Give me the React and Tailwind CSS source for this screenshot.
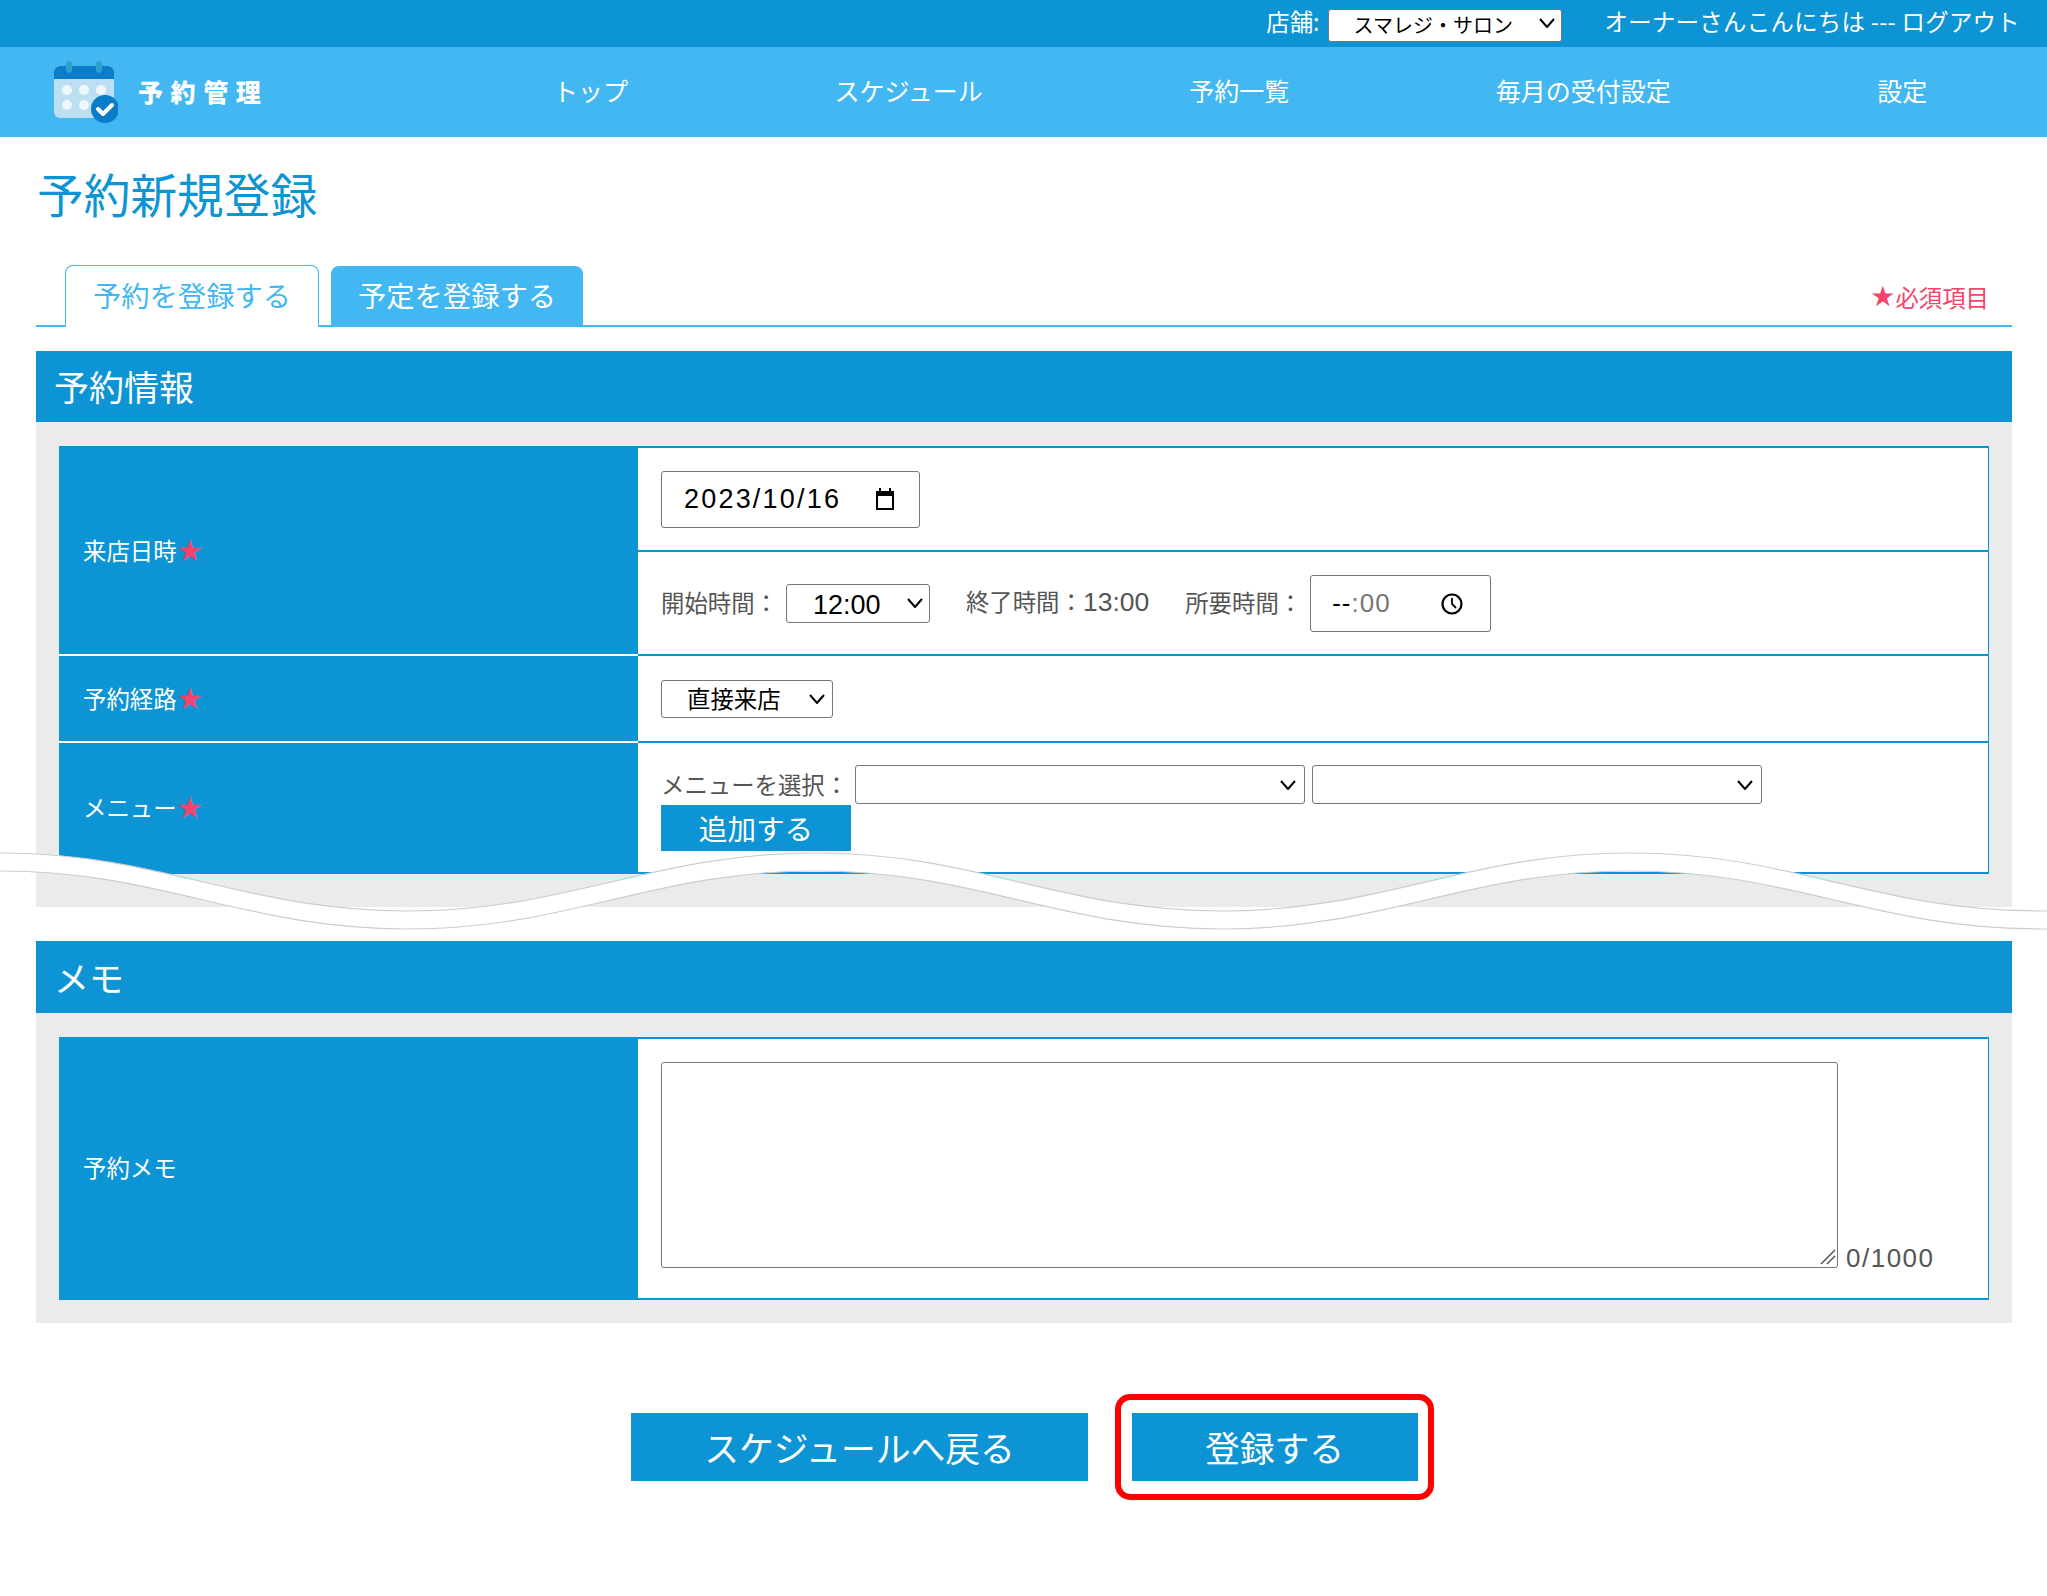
import React from 'react';

const Chevron = ({ className }) => (
    <svg viewBox="0 0 16 10" className={`absolute pointer-events-none w-[16px] h-[10px] ${className}`} fill="none" stroke="#000" strokeWidth="2">
        <path d="M1 1l7 8 7-8" />
    </svg>
);

const Select = ({ className, textClass = 'pl-[25px] pb-[1px] text-[23.4px]', chevronClass = 'right-[7px] top-[14px]', children }) => (
    <div className={`relative ${className}`}>
        <select className={`appearance-none w-full h-full bg-white border border-[#767676] rounded-[3px] text-black ${textClass}`}>
            {children}
        </select>
        <Chevron className={chevronClass} />
    </div>
);

const Star = ({ className }) => (
    <span className={`font-['DejaVu_Sans',sans-serif] leading-none text-[#f5436d] ${className}`}>★</span>
);

const Label = ({ text, required, className }) => (
    <div className={`w-[579px] shrink-0 bg-[#0d94d4] flex items-center pl-[24px] text-white text-[23.4px] ${className}`}>
        {text}
        {required && <Star className="text-[30px]" />}
    </div>
);

const SectionTitle = ({ children, className }) => (
    <div className={`bg-[#0d94d4] text-white text-[35px] pl-[18px] flex items-center ${className}`}>{children}</div>
);

const navItems = ['トップ', 'スケジュール', '予約一覧', '毎月の受付設定', '設定'];

const Logo = () => (
    <svg viewBox="0 0 64 62" className="w-[64px] h-[62px] shrink-0">
        <rect x="0" y="5" width="60" height="52" rx="6" fill="#bce0f1" />
        <path d="M0 18V11a6 6 0 0 1 6-6h48a6 6 0 0 1 6 6v7z" fill="#0a7cc8" />
        <rect x="12" y="0" width="6" height="12" rx="3" fill="#2f9fd0" />
        <rect x="42" y="0" width="6" height="12" rx="3" fill="#2f9fd0" />
        <g fill="#eef7fb">
            <circle cx="13" cy="29" r="5" />
            <circle cx="30" cy="29" r="5" />
            <circle cx="47" cy="29" r="5" />
            <circle cx="13" cy="44" r="5" />
            <circle cx="30" cy="44" r="5" />
        </g>
        <circle cx="51" cy="48" r="14" fill="#0a7cc8" />
        <path d="M44 48l5 5 9-9" fill="none" stroke="#fff" strokeWidth="4" strokeLinecap="round" strokeLinejoin="round" />
    </svg>
);

const App = () => {
    return (
        <div className="relative h-[1596px] bg-white font-['Noto_Sans_CJK_JP',sans-serif] overflow-hidden">
            {/* Top bar */}
            <div className="h-[47px] bg-[#0d94d4] flex items-center justify-end pr-[27px] pb-[2px] text-white text-[23.4px]">
                <span className="-mt-[1px]">店舗:</span>
                <Select
                    className="w-[234px] h-[33px] ml-[8px] mr-[43px]"
                    textClass="pl-[25px] pb-[2px] text-[20px]"
                    chevronClass="right-[7px] top-[12px]"
                >
                    <option>スマレジ・サロン</option>
                </Select>
                <span className="-mt-[1px] tracking-[0.3px]">オーナーさんこんにちは --- ログアウト</span>
            </div>

            {/* Nav */}
            <div className="h-[90px] bg-[#43b7f2] flex items-center pl-[54px] text-white">
                <Logo />
                <span className="ml-[20px] w-[415px] text-[25px] font-black tracking-[7.6px]">予約管理</span>
                <div className="flex gap-[206.5px] pb-[2px] text-[25px]">
                    {navItems.map((item) => (
                        <span key={item}>{item}</span>
                    ))}
                </div>
            </div>

            <div className="pl-[36px] pr-[35px]">
                <h1 className="h-[114px] flex items-center pb-[2px] text-[46.7px] text-[#0d94d4]">
                    <span className="pl-[1px]">予約新規登録</span>
                </h1>

                {/* Tabs */}
                <div className="h-[76px] flex items-end pl-[29px] gap-[12px] border-b-2 border-[#43b7f2] relative">
                    <div className="w-[254px] h-[62px] -mb-[2px] pb-[2px] bg-white border border-b-0 border-[#43b7f2] rounded-t-[8px] flex items-center justify-center text-[28.3px] text-[#43b7f2]">
                        予約を登録する
                    </div>
                    <div className="w-[252px] h-[61px] -mb-[2px] pb-[2px] bg-[#43b7f2] rounded-t-[8px] flex items-center justify-center text-[28.3px] text-white">
                        予定を登録する
                    </div>
                    <span className="ml-auto mr-[23px] mb-[10px] flex items-center text-[23.4px] text-[#f5436d]">
                        <Star className="text-[28px]" />必須項目
                    </span>
                </div>

                {/* Reservation info */}
                <SectionTitle className="mt-[24px] h-[71px]">予約情報</SectionTitle>
                <div className="bg-[#ebebeb] pt-[24px] pb-[33px] px-[23px]">
                    <div className="border-r border-[#0d94d4]">
                        <div className="flex h-[210px]">
                            <Label text="来店日時" required className="pt-[1px] border-b-2 border-white" />
                            <div className="flex-1 flex flex-col bg-white">
                                <div className="h-[104px] border-t-2 border-[#0d94d4] flex items-center pl-[23px]">
                                    <div className="relative w-[259px] h-[57px] border border-[#767676] rounded-[3px] flex items-center pl-[22px] text-[27px] tracking-[2.2px] font-['Liberation_Sans',sans-serif]">
                                        2023/10/16
                                        <svg viewBox="0 0 20 22" className="absolute right-[24px] top-[16px] w-[20px] h-[22px]">
                                            <path d="M4 0h2v3h8V0h2v3h3v19H1V3h3zM3 8v12h14V8z" fill="#000" />
                                        </svg>
                                    </div>
                                </div>
                                <div className="h-[106px] border-t-2 border-b-2 border-[#0d94d4] flex items-center pl-[23px] text-[23.4px] text-[#555]">
                                    <span>開始時間：</span>
                                    <Select
                                        className="w-[144px] h-[39px] ml-[8px]"
                                        textClass="pl-[26px] pb-[2px] text-[27px] font-['Liberation_Sans',sans-serif]"
                                        chevronClass="right-[7px] top-[14px]"
                                    >
                                        <option>12:00</option>
                                    </Select>
                                    <span className="ml-[36px]">終了時間：<span className="text-[26.5px] font-['Liberation_Sans',sans-serif]">13:00</span></span>
                                    <span className="ml-[36px]">所要時間：</span>
                                    <div className="relative ml-[8px] w-[181px] h-[57px] border border-[#767676] rounded-[3px] flex items-center pl-[21px] text-[26px] tracking-[1px] font-['Liberation_Sans',sans-serif] text-[#767676]">
                                        <span className="text-black">--</span>:00
                                        <svg viewBox="0 0 22 22" className="absolute right-[27px] top-[17px] w-[22px] h-[22px]" fill="none" stroke="#000" strokeWidth="2.2">
                                            <circle cx="11" cy="11" r="9.5" />
                                            <path d="M11 5v6l4 4" strokeWidth="1.8" />
                                        </svg>
                                    </div>
                                </div>
                            </div>
                        </div>

                        <div className="flex h-[87px]">
                            <Label text="予約経路" required className="border-b-2 border-white" />
                            <div className="flex-1 bg-white border-b-2 border-[#0d94d4] flex items-center pl-[23px]">
                                <Select className="w-[172px] h-[38px]" chevronClass="right-[8px] top-[14px]">
                                    <option>直接来店</option>
                                </Select>
                            </div>
                        </div>

                        <div className="flex h-[131px]">
                            <Label text="メニュー" required className="pb-[2px]" />
                            <div className="flex-1 bg-white border-b-2 border-[#0d94d4] pl-[23px] pt-[22px]">
                                <div className="flex items-center text-[23.4px] text-[#555]">
                                    <span className="w-[194px]">メニューを選択：</span>
                                    <Select className="w-[450px] h-[39px]" chevronClass="right-[9px] top-[15px]">
                                        <option></option>
                                    </Select>
                                    <Select className="w-[450px] h-[39px] ml-[7px]" chevronClass="right-[9px] top-[15px]">
                                        <option></option>
                                    </Select>
                                </div>
                                <button className="block w-[190px] h-[46px] mt-[1px] bg-[#0d94d4] text-white text-[28.6px] leading-none">追加する</button>
                            </div>
                        </div>
                    </div>
                </div>

                {/* Memo */}
                <SectionTitle className="mt-[34px] h-[72px]">メモ</SectionTitle>
                <div className="bg-[#ebebeb] pt-[24px] pb-[23px] px-[23px]">
                    <div className="flex h-[263px] border-r border-[#0d94d4]">
                        <Label text="予約メモ" className="pb-[2px]" />
                        <div className="flex-1 bg-white border-t-2 border-b-2 border-[#0d94d4] pl-[23px] pt-[23px] flex items-end pb-[30px]">
                            <div className="relative w-[1177px] h-[206px]">
                                <textarea className="block w-full h-full bg-white border border-[#767676] rounded-[3px] resize-none" />
                                <svg viewBox="0 0 16 16" className="absolute right-[2px] bottom-[3px] w-[16px] h-[16px]" fill="none" stroke="#555" strokeWidth="1.5">
                                    <path d="M1 15L15 1M7 15l8-8" />
                                </svg>
                            </div>
                            <span className="ml-[8px] -mb-[10px] text-[26px] tracking-[1.5px] text-[#555] font-['Liberation_Sans',sans-serif]">0/1000</span>
                        </div>
                    </div>
                </div>

                {/* Buttons */}
                <div className="mt-[71px] flex items-center pl-[595px]">
                    <button className="w-[457px] h-[68px] bg-[#0d94d4] text-white text-[34.8px]">スケジュールへ戻る</button>
                    <div className="ml-[27px] w-[319px] h-[106px] border-[6px] border-[#ff0000] rounded-[15px] flex items-center justify-center">
                        <button className="w-[286px] h-[68px] bg-[#0d94d4] text-white text-[34.8px]">登録する</button>
                    </div>
                </div>
            </div>

            {/* Wave cut */}
            <svg viewBox="0 0 2047 85" className="absolute left-0 top-[850px] w-[2047px] h-[85px] pointer-events-none">
                <path
                    d="M0 3C163 3 244 61 407 61S652 3 815 3S1060 61 1222 61S1467 3 1630 3S1875 61 2040 61L2047 61L2047 79L2040 79C1875 79 1793 21 1630 21C1467 21 1384 79 1222 79C1060 79 978 21 815 21C652 21 570 79 407 79C244 79 163 21 0 21Z"
                    fill="#fff"
                />
                <path d="M0 3C163 3 244 61 407 61S652 3 815 3S1060 61 1222 61S1467 3 1630 3S1875 61 2040 61L2047 61" fill="none" stroke="#ccc" strokeWidth="1.2" />
                <path d="M0 21C163 21 244 79 407 79S652 21 815 21S1060 79 1222 79S1467 21 1630 21S1875 79 2040 79L2047 79" fill="none" stroke="#ccc" strokeWidth="1.2" />
            </svg>
        </div>
    );
};

export default App;
